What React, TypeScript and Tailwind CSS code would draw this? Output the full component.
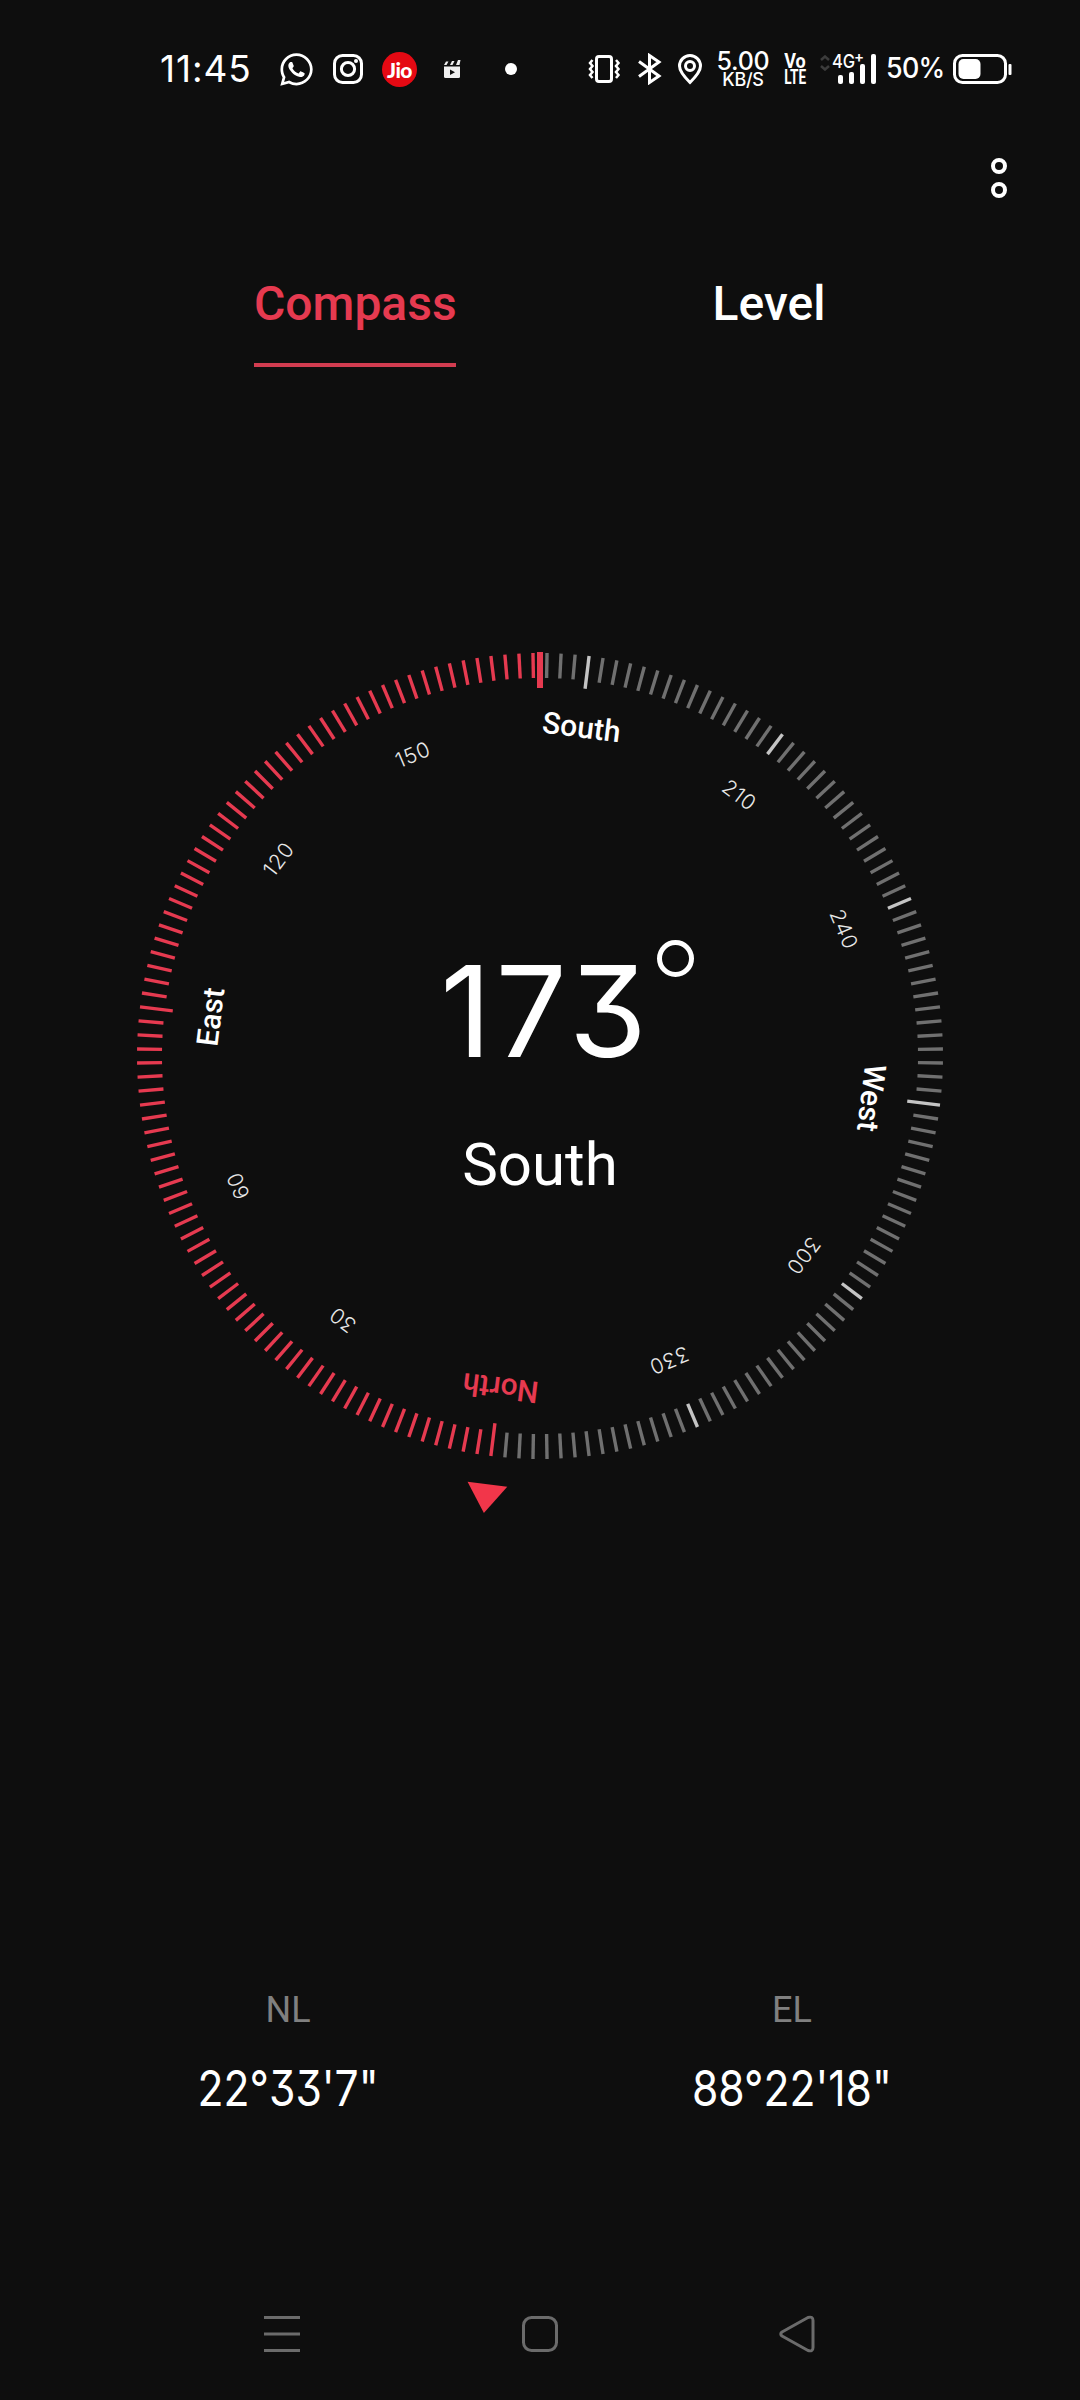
import React from "react";
import { FaWhatsapp } from "react-icons/fa";

const HEADING = 173;
const ticks = Array.from({ length: 180 }, (_, i) => i * 2);
const cardinals = [
  { deg: 0, label: "North" },
  { deg: 90, label: "East" },
  { deg: 180, label: "South" },
  { deg: 270, label: "West" },
];
const numbers = [30, 60, 120, 150, 210, 240, 300, 330];

// cv09 is Inter's flat-topped 3
const digits = "font-['Inter',sans-serif] [font-feature-settings:'cv09'_1]";

const tickColor = (deg: number) => {
  if (deg < HEADING) return "#e63a50";
  return deg % 30 === 0 ? "#c4c4c4" : "#707070";
};

const StatusBar: React.FC = () => (
  <header className="flex h-[138px] items-center pl-[160px] text-white">
    <span className={`${digits} mb-[2px] w-[92px] text-[37px] leading-none tracking-[0.9px]`}>
      11:45
    </span>
    <FaWhatsapp className="ml-[26px] size-[37px]" />
    <svg className="ml-[17px]" width="32" height="32" viewBox="0 0 32 32" fill="none" stroke="white" strokeWidth="3">
      <rect x="2.5" y="2.5" width="27" height="27" rx="8" />
      <circle cx="16" cy="16" r="6.6" />
      <circle cx="24" cy="8" r="2" fill="white" stroke="none" />
    </svg>
    <span className="ml-[18px] flex size-[35px] items-center justify-center rounded-full bg-[#e50913] font-['Lato',sans-serif] text-[21px] leading-none font-black tracking-tight">
      Jio
    </span>
    <svg className="ml-[26px]" width="18" height="18" viewBox="0 0 18 18">
      <path d="M1 6.500h16v10a1.500 1.500 0 0 1-1.500 1.500h-13a1.500 1.500 0 0 1-1.500-1.500z" fill="#eee" />
      <path d="M1 5l2-3.500h2.500l-2 3.500zM7 5l2-4h2.500l-2 4zM13 5l2-5h2.500l-1 5z" fill="#eee" />
      <path d="M7 9.500v5.500l5-2.700z" fill="#0e0e0e" />
    </svg>
    <span className="ml-[44px] size-3 rounded-full bg-white" />

    <svg className="ml-[71px]" width="33" height="30" viewBox="0 0 33 30" fill="none" stroke="white" strokeWidth="3">
      <rect x="8.500" y="2.500" width="15" height="25" rx="2.500" />
      <path d="M4.500 6l-2.500 3 2.500 3-2.500 3 2.500 3-2.500 3 2.500 3M28 6l2.500 3-2.500 3 2.500 3-2.500 3 2.500 3-2.500 3" strokeWidth="2.500" />
    </svg>
    <svg className="ml-4" width="25" height="32" viewBox="0 0 25 32" fill="none" stroke="white" strokeWidth="3">
      <path d="M2 8.500l20 14.500-9.500 6.500v-27l9.500 6.500-20 14.500" />
    </svg>
    <svg className="ml-[15px]" width="26" height="32" viewBox="0 0 26 32" fill="none" stroke="white" strokeWidth="3">
      <path d="M13 29.500c-4-4-10.500-10.500-10.500-16.500a10.500 10.500 0 0 1 21 0c0 6-6.500 12.500-10.500 16.500z" />
      <circle cx="13" cy="13" r="4.500" />
    </svg>
    <div className="mt-[2px] ml-[13px] flex w-[54px] flex-col items-center font-['Inter',sans-serif] font-medium">
      <span className="text-[25px] leading-[20px] tracking-[-0.3px]">5.00</span>
      <span className="text-[18px] leading-[18px] tracking-[-0.3px]">KB/S</span>
    </div>
    <div className="ml-[13px] flex w-[24px] flex-col items-center font-['Roboto',sans-serif] font-bold">
      <span className="scale-x-90 text-[20px] leading-[16px]">Vo</span>
      <span className="scale-x-[0.68] text-[20px] leading-[16px]">LTE</span>
    </div>
    <svg className="mb-3 ml-[13px]" width="10" height="16" viewBox="0 0 10 16" fill="none" stroke="#3c3c3c" strokeWidth="2.500">
      <path d="M1 5l4-3.500 4 3.500M1 11l4 3.500 4-3.500" />
    </svg>
    <div className="relative ml-[3px] h-[30px] w-[46px]">
      <svg width="46" height="30" viewBox="0 0 46 30" fill="white">
        <rect x="5" y="21" width="5" height="9" rx="2" />
        <rect x="16" y="18" width="5" height="12" rx="2" />
        <rect x="27" y="10" width="5" height="20" rx="2" />
        <rect x="38" y="0" width="5" height="30" rx="2" />
      </svg>
      <span className="absolute top-0 left-[-1px] origin-left scale-x-[0.87] font-['Inter',sans-serif] text-[19px] leading-[16px] font-medium">
        4G
      </span>
      <span className="absolute top-[-4px] left-[21px] font-['Inter',sans-serif] text-[15px] leading-[14px] font-semibold">
        +
      </span>
    </div>
    <span className="mb-[2px] ml-[7px] w-[58px] origin-left scale-x-[0.96] font-['Inter',sans-serif] text-[28px] leading-none font-medium tracking-[-0.7px]">
      50%
    </span>
    <svg className="ml-[9px]" width="59" height="30" viewBox="0 0 59 30" fill="none">
      <rect x="1.500" y="1.500" width="51" height="27" rx="8" stroke="white" strokeWidth="3" />
      <rect x="5.500" y="5" width="22" height="20" rx="5" fill="white" />
      <rect x="55.500" y="10" width="3" height="11" rx="1" fill="white" />
    </svg>
  </header>
);

const Dial: React.FC = () => (
  <svg className="col-start-1 row-start-1" width="960" height="960" viewBox="-480 -480 960 960">
    <g transform={`rotate(${-HEADING})`}>
      {ticks.map((deg) => (
        <line
          key={deg}
          y1={-403}
          y2={deg % 90 === 0 ? -370 : -378}
          stroke={tickColor(deg)}
          strokeWidth={3.4}
          transform={`rotate(${deg})`}
        />
      ))}
      <path d="M-20 -431.500H20L0 -460.500z" fill="#f2364a" />
    </g>
    <g transform={`translate(1 1.5) rotate(${-HEADING})`}>
      {cardinals.map(({ deg, label }) => (
        <text
          key={deg}
          y={-322.5}
          textAnchor="middle"
          transform={`rotate(${deg})`}
          fill={deg === 0 ? "#e63a50" : "#ffffff"}
          className="font-['Roboto',sans-serif] text-[30px] font-medium"
        >
          {label}
        </text>
      ))}
      {numbers.map((deg) => (
        <text
          key={deg}
          x={0.4}
          y={-321.5}
          textAnchor="middle"
          transform={`rotate(${deg})`}
          fill="#e8e8e8"
          className={`${digits} text-[21px] font-light tracking-[0.8px]`}
        >
          {deg}
        </text>
      ))}
    </g>
    {/* fixed heading marker */}
    <rect x="-3" y="-404" width="6" height="36" fill="#e63a50" />
  </svg>
);

const Coordinate: React.FC<{ label: string; value: string }> = ({ label, value }) => (
  <div className="flex w-[504px] flex-col items-center">
    <span className="font-['Roboto',sans-serif] text-[36px] leading-[42px] text-[#808080]">{label}</span>
    <span className={`${digits} mt-[30px] scale-x-[0.87] text-[49px] leading-[56px] text-white`}>
      {value}
    </span>
  </div>
);

const App: React.FC = () => {
  return (
    <main className="flex h-[2400px] w-[1080px] flex-col overflow-hidden bg-[#0e0e0e]">
      <StatusBar />

      <div className="flex h-[80px] flex-col items-end gap-2 pt-5 pr-[73px]">
        <span className="size-4 rounded-full border-4 border-white" />
        <span className="size-4 rounded-full border-4 border-white" />
      </div>

      <nav className="flex h-[149px] items-start pt-[57px] pl-[254px] font-['Roboto',sans-serif] text-[48px] leading-[58px] font-medium">
        <button className="w-[202px] border-b-4 border-[#d23c50] pb-[30px] text-center text-[#e63a50]">Compass</button>
        <button className="ml-[212px] w-[202px] text-center text-white">Level</button>
      </nav>

      <section className="mt-[209px] grid justify-center">
        <Dial />
        <div className="col-start-1 row-start-1 flex flex-col items-center pt-[363px] text-white">
          <div className="relative mr-[-11px]">
            <span className={`${digits} block text-[126px] leading-[144px] tracking-[4px]`}>{HEADING}</span>
            <span className="absolute top-[1px] right-[-43px] size-[37px] rounded-full border-[5px] border-white" />
          </div>
          <span className="mt-[46px] font-['Roboto',sans-serif] text-[60px] leading-[72px]">South</span>
        </div>
      </section>

      <section className="mt-[453px] flex justify-center">
        <Coordinate label="NL" value={`22°33'7"`} />
        <Coordinate label="EL" value={`88°22'18"`} />
      </section>

      <footer className="mt-auto flex h-[132px] items-center justify-between pr-[264px] pl-[263px] text-[#6b6b6b]">
        <svg width="38" height="38" viewBox="0 0 38 38" stroke="currentColor" strokeWidth="3">
          <path d="M1 2.500h36M1 19h36M1 35.500h36" />
        </svg>
        <svg width="38" height="38" viewBox="0 0 38 38" fill="none" stroke="currentColor" strokeWidth="3">
          <rect x="2.500" y="2.500" width="33" height="33" rx="8" />
        </svg>
        <svg width="38" height="38" viewBox="0 0 38 38" fill="none" stroke="currentColor" strokeWidth="3" strokeLinejoin="round">
          <path d="M4 17l26-14.500q5-1.500 5 3v27q0 4.500-5 3l-26-14.500q-2.500-2 0-4z" />
        </svg>
      </footer>
    </main>
  );
};

export default App;
